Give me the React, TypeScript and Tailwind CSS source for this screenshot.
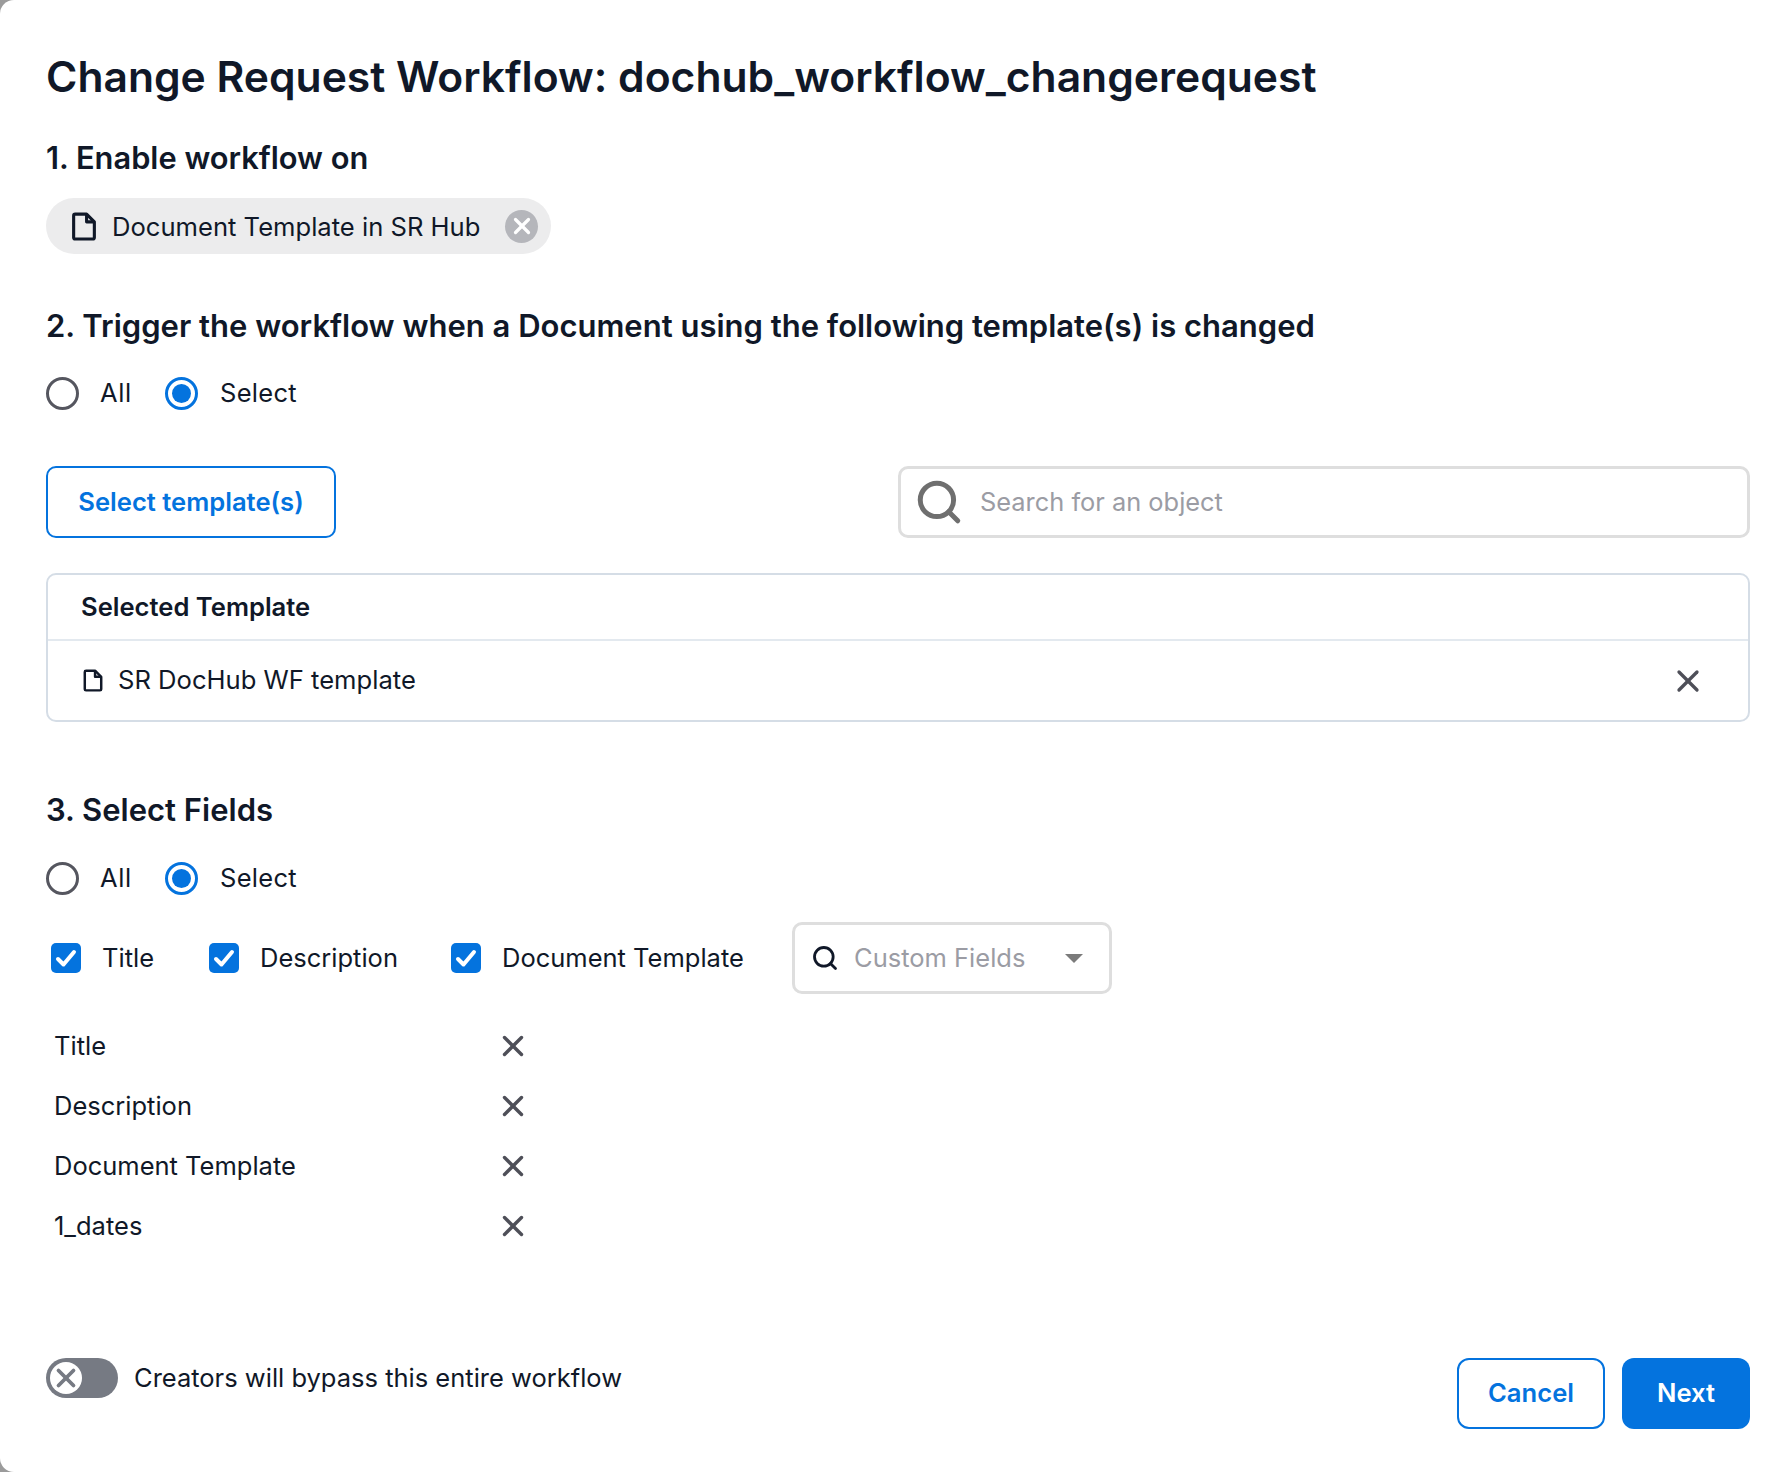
import { Search, X } from 'lucide-react';

const INK = 'text-[#101828]';

function DocIcon({ className }: { className: string }) {
  return (
    <svg viewBox="0 0 24 28" fill="none" stroke="#101828" strokeWidth="3" strokeLinejoin="round" className={className}>
      <path d="M2 3.500a1.500 1.500 0 0 1 1.500-1.500H14.500L22 9.500v15a1.500 1.500 0 0 1-1.500 1.500h-17A1.500 1.500 0 0 1 2 24.500z" />
      <path d="M14.500 2v7.500H22" />
    </svg>
  );
}

function Radios() {
  return (
    <div className="flex items-center h-[34px] text-[25.5px]">
      <span className="w-[33px] h-[33px] rounded-full border-[3px] border-[#55565f]" />
      <span className="ml-[21px] w-[65px] tracking-[0.6px]">All</span>
      <span className="w-[33px] h-[33px] rounded-full border-[3px] border-[#0473de] flex items-center justify-center">
        <span className="w-[19px] h-[19px] rounded-full bg-[#0473de]" />
      </span>
      <span className="ml-[22px] tracking-[0.3px]">Select</span>
    </div>
  );
}

function Check({ label, className }: { label: string; className: string }) {
  return (
    <div className={`flex items-center ${className}`}>
      <span className="w-[30px] h-[30px] rounded-[5px] bg-[#0473de] flex items-center justify-center">
        <svg viewBox="0 0 24 24" fill="none" stroke="#fff" strokeWidth="4" strokeLinecap="round" strokeLinejoin="round" className="w-[24px] h-[24px]">
          <path d="M4 13l5.500 5.500L20 6" />
        </svg>
      </span>
      <span className="ml-[21px] text-[25.5px]">{label}</span>
    </div>
  );
}

const fields = ['Title', 'Description', 'Document Template', '1_dates'];

export default function App() {
  return (
    <div className="w-[1786px] h-[1472px] bg-[#9b9b9b] overflow-hidden" style={{ fontFamily: 'Inter, sans-serif' }}>
      <div className={`h-full bg-white rounded-l-[14px] pl-[46px] pr-[36px] flex flex-col ${INK}`}>
        <h1 className="mt-[47px] h-[60px] leading-[60px] text-[42.6px] font-semibold whitespace-nowrap">
          Change Request Workflow: dochub_workflow_changerequest
        </h1>

        <h2 className="mt-[31px] h-[40px] leading-[40px] text-[30.8px] font-semibold">1. Enable workflow on</h2>
        <div className="mt-[20px] w-[505px] h-[56px] rounded-full bg-[#ececed] flex items-center pl-[25px] pr-[13px]">
          <DocIcon className="w-[26px] h-[29px]" />
          <span className="ml-[15px] mt-[2px] text-[25.6px]">Document Template in SR Hub</span>
          <span className="ml-auto w-[33px] h-[33px] rounded-full bg-[#b5b6bb] flex items-center justify-center">
            <X className="w-[26px] h-[26px] text-white" strokeWidth={3} />
          </span>
        </div>

        <h2 className="mt-[52px] h-[40px] leading-[40px] text-[31px] font-semibold">
          2. Trigger the workflow when a Document using the following template(s) is changed
        </h2>
        <div className="mt-[30px]">
          <Radios />
        </div>

        <div className="mt-[56px] flex justify-between">
          <button className="w-[290px] h-[72px] rounded-[10px] border-2 border-[#0473de] text-[#0473de] text-[25.6px] font-semibold">
            Select template(s)
          </button>
          <div className="w-[852px] h-[72px] rounded-[10px] border-[3px] border-[#dedede] flex items-center pl-[13px]">
            <Search className="w-[50px] h-[50px] text-[#6f6f6f]" strokeWidth={2.4} />
            <span className="ml-[16px] text-[25.4px] text-[#9b9ca4]">Search for an object</span>
          </div>
        </div>

        <div className="mt-[35px] h-[149px] rounded-[10px] border-2 border-[#d5dde6]">
          <div className="h-[66px] border-b-2 border-[#e3e9ef] pl-[33px] flex items-center text-[25.6px] font-semibold">
            Selected Template
          </div>
          <div className="h-[79px] pl-[35px] pr-[42px] flex items-center">
            <DocIcon className="w-[20px] h-[23px]" />
            <span className="ml-[15px] text-[25.6px]">SR DocHub WF template</span>
            <X className="ml-auto w-[36px] h-[36px] text-[#4e4f58]" strokeWidth={2.2} />
          </div>
        </div>

        <h2 className="mt-[68px] h-[40px] leading-[40px] text-[31px] font-semibold">3. Select Fields</h2>
        <div className="mt-[31px]">
          <Radios />
        </div>

        <div className="mt-[27px] flex items-center">
          <Check label="Title" className="ml-[5px] w-[158px]" />
          <Check label="Description" className="w-[242px]" />
          <Check label="Document Template" className="w-[341px]" />
          <div className="w-[320px] h-[72px] rounded-[10px] border-[3px] border-[#dedede] flex items-center pl-[16px]">
            <Search className="w-[28px] h-[28px] text-[#101828]" strokeWidth={2.4} />
            <span className="ml-[15px] text-[25.5px] text-[#9b9ca4]">Custom Fields</span>
            <span className="ml-auto mr-[26px] w-0 h-0 border-x-[9px] border-x-transparent border-t-[9px] border-t-[#7b7b7b]" />
          </div>
        </div>

        <div className="mt-[22px] flex flex-col">
          {fields.map((f) => (
            <div key={f} className="h-[60px] pl-[8px] flex items-center">
              <span className="w-[442px] text-[25.5px]">{f}</span>
              <X className="w-[34px] h-[34px] text-[#4e4f58]" strokeWidth={2.4} />
            </div>
          ))}
        </div>

        <div className="mt-[102px] flex items-start justify-between">
          <div className="flex items-center">
            <div className="w-[72px] h-[40px] rounded-full bg-[#767a83] flex items-center pl-[4px]">
              <span className="w-[32px] h-[32px] rounded-full bg-white flex items-center justify-center">
                <X className="w-[30px] h-[30px] text-[#767a83]" strokeWidth={3} />
              </span>
            </div>
            <span className="ml-[16px] text-[25.5px]">Creators will bypass this entire workflow</span>
          </div>
          <div className="flex gap-[17px]">
            <button className="w-[148px] h-[71px] rounded-[12px] border-2 border-[#0473de] text-[#0473de] text-[25.6px] font-semibold">
              Cancel
            </button>
            <button className="w-[128px] h-[71px] rounded-[12px] bg-[#0473de] text-white text-[25.6px] font-semibold">
              Next
            </button>
          </div>
        </div>
      </div>
    </div>
  );
}
